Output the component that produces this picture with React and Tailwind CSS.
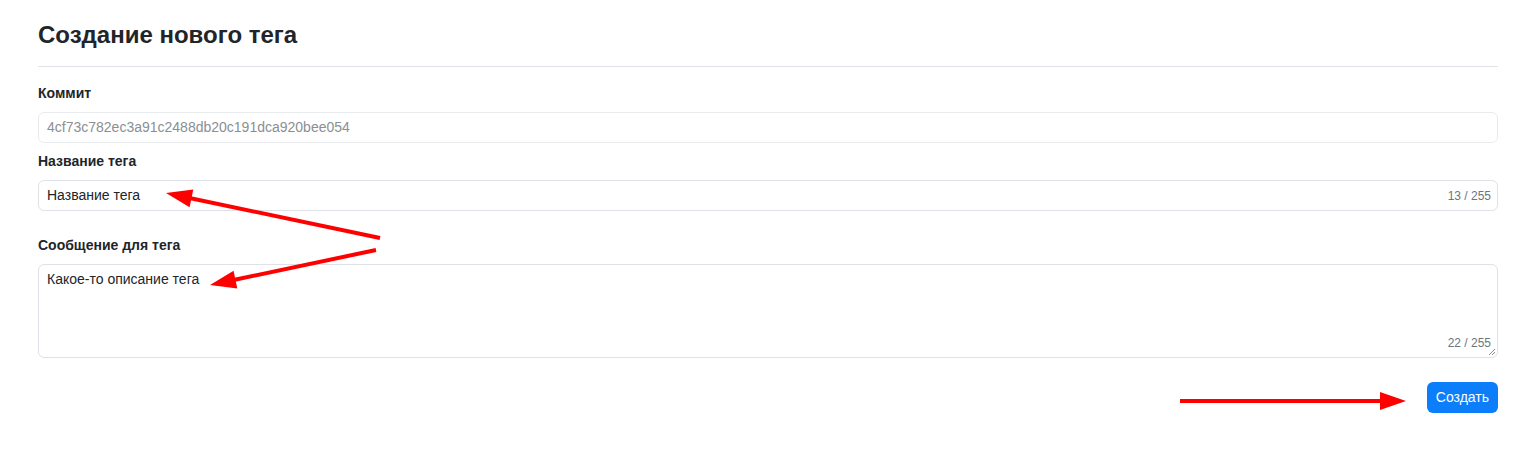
function Arrow({ x1, y1, x2, y2, head = 26, width = 18 }) {
  const dx = x2 - x1
  const dy = y2 - y1
  const len = Math.sqrt(dx * dx + dy * dy)
  const ux = dx / len
  const uy = dy / len
  const bx = x2 - ux * head
  const by = y2 - uy * head
  const px = -uy * (width / 2)
  const py = ux * (width / 2)
  return (
    <g>
      <line x1={x1} y1={y1} x2={bx + ux * 2} y2={by + uy * 2} stroke="#ff0000" strokeWidth={4} />
      <polygon points={`${x2},${y2} ${bx + px},${by + py} ${bx - px},${by - py}`} fill="#ff0000" />
    </g>
  )
}

function App() {
  return (
    <div className="relative w-[1538px] h-[450px] bg-white font-['Liberation_Sans',Arial,sans-serif] text-[#212529]">
      <div className="pl-[38px] pr-[40px] pt-[18px]">
        <h1 className="text-[24px] leading-[34px] font-bold">Создание нового тега</h1>
        <div className="mt-[14px] border-t border-[#dee2e6]" />

        <label className="block mt-[16px] text-[14px] leading-[20px] font-bold">Коммит</label>
        <div className="mt-[9px] h-[31px] border border-[#e9ecef] rounded-[6px] px-[8px] flex items-center text-[14px] text-[#8a8f94]">
          4cf73c782ec3a91c2488db20c191dca920bee054
        </div>

        <label className="block mt-[8px] text-[14px] leading-[20px] font-bold">Название тега</label>
        <div className="mt-[9px] h-[31px] border border-[#dee2e6] rounded-[6px] pl-[8px] pr-[6px] flex items-center justify-between">
          <span className="text-[14px]">Название тега</span>
          <span className="text-[12px] text-[#6c757d]">13 / 255</span>
        </div>

        <label className="block mt-[24px] text-[14px] leading-[20px] font-bold">Сообщение для тега</label>
        <div className="relative mt-[9px] h-[94px] border border-[#dee2e6] rounded-[6px] px-[8px] pt-[2px]">
          <span className="text-[14px]">Какое-то описание тега</span>
          <span className="absolute right-[6px] bottom-[5px] text-[12px] text-[#6c757d]">22 / 255</span>
          <svg className="absolute right-[1px] bottom-[1px]" width="8" height="8" viewBox="0 0 8 8">
            <line x1="1" y1="7" x2="7" y2="1" stroke="#888" strokeWidth="1" />
            <line x1="4" y1="7" x2="7" y2="4" stroke="#888" strokeWidth="1" />
          </svg>
        </div>

        <div className="mt-[24px] flex justify-end">
          <button className="h-[31px] px-[9px] rounded-[6px] bg-[#0d7ef9] text-white text-[14px]">Создать</button>
        </div>
      </div>

      <svg className="absolute inset-0 pointer-events-none" width="1538" height="450">
        <Arrow x1={380} y1={238} x2={166} y2={193} />
        <Arrow x1={376} y1={250} x2={210} y2={285} />
        <Arrow x1={1180} y1={401} x2={1406} y2={401} />
      </svg>
    </div>
  )
}

export default App
